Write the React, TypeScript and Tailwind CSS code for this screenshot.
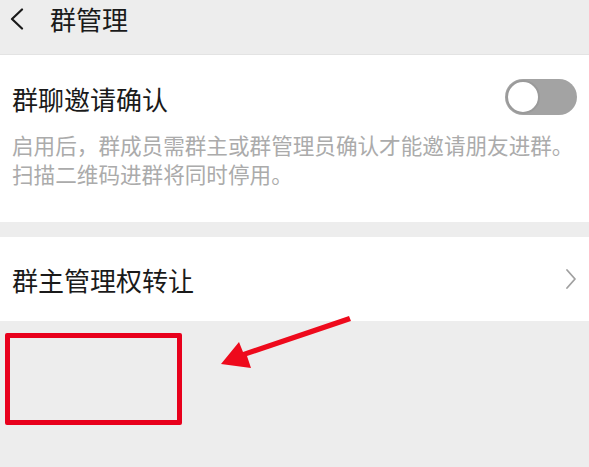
import React from "react";

export default function App() {
  const font = { fontFamily: '"Noto Sans CJK SC", "Noto Sans", sans-serif' };
  return (
    <div className="relative w-[589px] h-[467px] overflow-hidden bg-[#ededed]" style={font}>
      {/* header */}
      <div className="h-[55px] flex items-start pt-[2px] border-b border-[#e3e3e3] bg-[#ededed]">
        <div className="w-[50px] h-[34px] flex items-center pl-[9px]">
          <svg width="16" height="22" viewBox="0 0 16 22">
            <path d="M13 1.5 L3 11 L13 20.5" fill="none" stroke="#1a1a1a" strokeWidth="2.2" strokeLinecap="round" strokeLinejoin="round" />
          </svg>
        </div>
        <div className="text-[26px] leading-[34px] text-[#1a1a1a]">群管理</div>
      </div>

      {/* invite confirm section */}
      <div className="bg-white h-[167px] pt-[27px] px-[12px]">
        <div className="flex items-center justify-between h-[34px]">
          <div className="text-[26px] leading-[34px] text-[#1a1a1a]">群聊邀请确认</div>
          <div className="relative w-[72px] h-[36px] rounded-full bg-[#a3a3a3] mt-[-4px]">
            <div className="absolute left-[1px] top-[1px] w-[34px] h-[34px] rounded-full bg-white border-[2px] border-[#9a9a9a]" />
          </div>
        </div>
        <div className="mt-[14px] text-[21.6px] leading-[29px] text-[#ababab] whitespace-nowrap">
          <div>启用后，群成员需群主或群管理员确认才能邀请朋友进群。</div>
          <div>扫描二维码进群将同时停用。</div>
        </div>
      </div>

      <div className="h-[15px]" />

      {/* transfer row */}
      <div className="bg-white h-[84px] flex items-center justify-between pl-[12px] pr-[12px]">
        <div className="text-[26px] leading-[34px] text-[#1a1a1a] mt-[2px]">群主管理权转让</div>
        <svg width="12" height="22" viewBox="0 0 12 22">
          <path d="M2 2 L10 11 L2 20" fill="none" stroke="#a0a0a0" strokeWidth="1.8" strokeLinecap="round" strokeLinejoin="round" />
        </svg>
      </div>

      {/* annotation rectangle */}
      <div className="absolute left-[5px] top-[333px] w-[177px] h-[92px] border-[5px] border-[#e8001c] rounded-[2px]" />

      {/* annotation arrow */}
      <svg className="absolute left-0 top-0" width="589" height="467" viewBox="0 0 589 467">
        <path d="M349 316 L351 321 L247 356 L251 368 L221 364 L239 342 L243 352 Z" fill="#ee0a1c" />
      </svg>
    </div>
  );
}
